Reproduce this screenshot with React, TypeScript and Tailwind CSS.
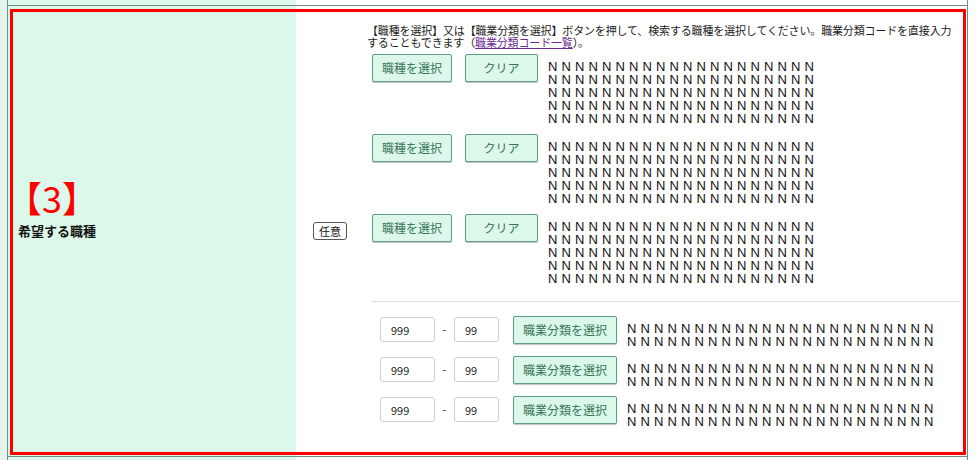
import React from "react"

const JP = "font-['Noto_Sans_CJK_JP','Noto_Sans',sans-serif]"

const nLine = (count: number) => Array(count).fill("N").join(" ")

function GreenButton({ children, className }: { children: React.ReactNode; className?: string }) {
  return (
    <button
      type="button"
      className={
        "h-[28px] shrink-0 rounded-[2px] border border-[#5f9c83] bg-[#dcf8eb] text-[12px] text-[#3a7559] shadow-[0_1px_1px_rgba(0,0,0,0.25)] " +
        (className ?? "")
      }
    >
      {children}
    </button>
  )
}

function NBlock({ lines, count }: { lines: number; count: number }) {
  return (
    <div className="mt-[6px] font-['Liberation_Sans',Arial,sans-serif] text-[13px] leading-[13px] tracking-[0.25px] text-[#111] whitespace-pre">
      {Array.from({ length: lines }).map((_, i) => (
        <div key={i}>{nLine(count)}</div>
      ))}
    </div>
  )
}

function JobRow({ first }: { first?: boolean }) {
  return (
    <div className={"flex items-start " + (first ? "mt-[6px]" : "mt-[9px]")}>
      <GreenButton className="w-[80px]">職種を選択</GreenButton>
      <GreenButton className="ml-[13px] w-[73px]">クリア</GreenButton>
      <div className="ml-[10px]">
        <NBlock lines={5} count={20} />
      </div>
    </div>
  )
}

function CodeRow({ first }: { first?: boolean }) {
  return (
    <div className={"flex items-start " + (first ? "mt-[14px]" : "mt-[8px]")}>
      <input
        readOnly
        value="999"
        className="ml-[8px] mt-[1px] h-[25px] w-[55px] rounded-[3px] border border-[#cfcfcf] px-[10px] text-[11px] text-[#222] outline-none"
      />
      <span className="mt-[5px] w-[19px] text-center text-[11px] text-[#222]">-</span>
      <input
        readOnly
        value="99"
        className="mt-[1px] h-[25px] w-[45px] rounded-[3px] border border-[#cfcfcf] px-[10px] text-[11px] text-[#222] outline-none"
      />
      <GreenButton className="ml-[14px] w-[104px]">職業分類を選択</GreenButton>
      <div className="ml-[10px]">
        <NBlock lines={2} count={23} />
      </div>
    </div>
  )
}

export default function App() {
  return (
    <div className={"relative h-[460px] w-[978px] overflow-hidden bg-white " + JP}>
      <div className="flex">
        {/* left gutter */}
        <div className="w-[7px] bg-[#e4f3ec]" />

        <div className="w-[961px] border-l border-r border-[#6b8f80]">
          {/* previous row tail */}
          <div className="flex h-[5px]">
            <div className="w-[288px] bg-[#dcf8eb]" />
            <div className="flex-1 bg-white" />
          </div>

          {/* row: 希望する職種 */}
          <div className="relative flex h-[452px] border-t border-b border-[#6b8f80]">
            <div className="flex w-[288px] items-center bg-[#dcf8eb] pl-[10px]">
              <div className="relative">
                <div className="absolute bottom-[22px] left-[-12px] whitespace-nowrap text-[36px] leading-[40px] text-[#ff0000]">
                  【3】
                </div>
                <div className="text-[13px] font-bold leading-[16px] text-[#111]">希望する職種</div>
              </div>
            </div>

            <div className="flex flex-1 items-center pl-[17px] pr-[7px]">
              <span className="shrink-0 rounded-[3px] border border-[#555] px-[5px] text-[11px] leading-[16px] text-[#111]">
                任意
              </span>

              <div className="ml-[25px] flex-1 self-stretch pt-[18px]">
                <p className="-ml-[5px] whitespace-nowrap text-[11px] leading-[12px] tracking-[-0.15px] text-[#222]">
                  【職種を選択】又は【職業分類を選択】ボタンを押して、検索する職種を選択してください。職業分類コードを直接入力
                  <br />
                  することもできます（
                  <a className="text-[#6b2c94] underline">職業分類コード一覧</a>
                  ）。
                </p>

                <JobRow first />
                <JobRow />
                <JobRow />

                <div className="mt-[16px] h-px bg-[#dddddd]" />

                <CodeRow first />
                <CodeRow />
                <CodeRow />
              </div>
            </div>

            {/* annotation frame */}
            <div className="pointer-events-none absolute bottom-[1px] left-[2px] right-[1px] top-[3px] border-[3px] border-[#ff0000]" />
          </div>

          {/* next row head */}
          <div className="flex h-[3px]">
            <div className="w-[288px] bg-[#dcf8eb]" />
            <div className="flex-1 bg-white" />
          </div>
        </div>
      </div>
    </div>
  )
}
